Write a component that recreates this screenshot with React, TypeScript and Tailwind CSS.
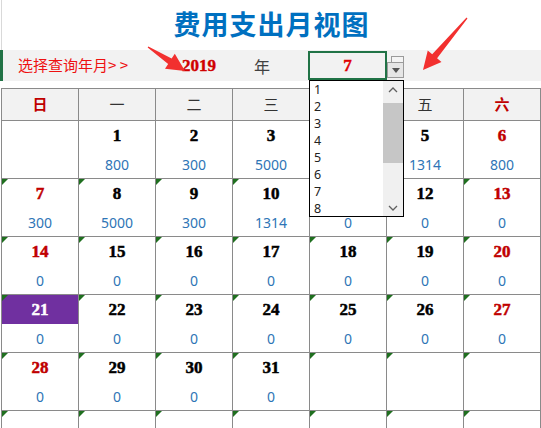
import React from 'react';

type Cell = { day?: number; amount?: number; mark?: boolean };

const weekNames = ['日', '一', '二', '三', '四', '五', '六'];

const amounts: Record<number, number> = { 1: 800, 2: 300, 3: 5000, 4: 300, 5: 1314, 6: 800, 7: 300, 8: 5000, 9: 300, 10: 1314 };

// July 2019 starts on Monday
const buildRows = (): Cell[][] => {
  const rows: Cell[][] = [];
  for (let r = 0; r < 6; r++) {
    const row: Cell[] = [];
    for (let c = 0; c < 7; c++) {
      const n = r * 7 + c;
      if (n >= 1 && n <= 31) row.push({ day: n, amount: amounts[n] ?? 0, mark: r > 0 });
      else row.push({ mark: r > 0 });
    }
    rows.push(row);
  }
  return rows;
};

const serif = { fontFamily: '"Liberation Serif", "Times New Roman", serif' };
const cjk = { fontFamily: '"Noto Sans CJK SC", sans-serif' };

const Arrow: React.FC<{ tail: [number, number]; tip: [number, number] }> = ({ tail, tip }) => {
  const dx = tip[0] - tail[0];
  const dy = tip[1] - tail[1];
  const len = Math.hypot(dx, dy);
  const ux = dx / len;
  const uy = dy / len;
  const nx = -uy;
  const ny = ux;
  const L = 18;
  const bx = tip[0] - ux * L;
  const by = tip[1] - uy * L;
  const pt = (x: number, y: number, k: number) => `${x + nx * k},${y + ny * k}`;
  const points = [
    pt(tail[0], tail[1], 0.6),
    pt(bx, by, 3.2),
    pt(bx, by, 9),
    `${tip[0]},${tip[1]}`,
    pt(bx, by, -9),
    pt(bx, by, -3.2),
    pt(tail[0], tail[1], -0.6),
  ].join(' ');
  return <polygon points={points} fill="#f2302f" />;
};

const DayCell: React.FC<{ cell: Cell; col: number }> = ({ cell, col }) => {
  const weekend = col === 0 || col === 6;
  const today = cell.day === 21;
  return (
    <div className="relative h-[58px] border-r border-b border-[#8a8a8a] flex flex-col">
      {cell.mark && (
        <span className="absolute left-0 top-0 w-0 h-0 border-t-[6px] border-r-[6px] border-t-[#1f6f1f] border-r-transparent" />
      )}
      <div
        className={`h-[29px] flex items-center justify-center text-[17px] font-bold [-webkit-text-stroke:0.5px] ${
          today ? 'bg-[#7030a0] text-white' : weekend ? 'text-[#c00000]' : 'text-black'
        }`}
        style={serif}
      >
        {cell.day ?? ''}
      </div>
      <div className="h-[28px] flex items-center justify-center text-[14px] text-[#2e75b6]">
        {cell.day ? cell.amount : ''}
      </div>
    </div>
  );
};

export default function App() {
  const rows = buildRows();
  return (
    <div
      className="relative w-[541px] h-[428px] overflow-hidden bg-white"
      style={{ fontFamily: '"Noto Sans", "Noto Sans CJK SC", sans-serif' }}
    >
      <div className="h-[50px] ml-px border-l border-[#d9d9d9] flex items-center justify-center">
        <h1 className="text-[27px] font-bold text-[#0070c0] tracking-[1px] leading-none pb-1" style={cjk}>
          费用支出月视图
        </h1>
      </div>

      <div className="h-[31px] bg-[#f2f2f2] border-l-[3px] border-[#217346] flex items-center">
        <div className="w-[179px] pl-[15px] text-[15px] text-[#ee1111] whitespace-pre" style={cjk}>
          选择查询年月&gt; &gt;
        </div>
        <div className="w-[72px] text-[17px] font-bold text-[#d00000] [-webkit-text-stroke:0.4px]" style={serif}>
          2019
        </div>
        <div className="w-[54px] text-[16px] text-[#404040]" style={cjk}>
          年
        </div>
        <div
          className="w-[79px] h-[29px] self-start mt-px border-2 border-[#217346] flex items-center justify-center text-[17px] font-bold text-[#e00000] [-webkit-text-stroke:0.4px]"
          style={serif}
        >
          7
        </div>
        <div className="relative w-[17px] h-[22px] self-start mt-[6px]">
          <div className="absolute right-0 top-0 w-[13px] h-[8px] border border-[#9a9a9a] bg-[#f4f4f4]" />
          <div className="absolute left-0 bottom-0 w-[17px] h-[16px] border border-[#9a9a9a] bg-[#e6e6e6] flex items-center justify-center">
            <svg width="8" height="5" viewBox="0 0 8 5">
              <polygon points="0,0 8,0 4,5" fill="#555" />
            </svg>
          </div>
        </div>
      </div>

      <div className="h-[7px]" />

      <div className="ml-px border-l border-t border-[#8a8a8a] grid grid-cols-[repeat(7,77px)]">
        {weekNames.map((w, i) => (
          <div
            key={w}
            className={`h-[32px] bg-[#f2f2f2] border-r border-b border-[#8a8a8a] flex items-center justify-center text-[15px] ${
              i === 0 || i === 6 ? 'text-[#c00000] font-bold' : 'text-[#333]'
            }`}
            style={cjk}
          >
            {w}
          </div>
        ))}
        {rows.map((row, r) => row.map((cell, c) => <DayCell key={`${r}-${c}`} cell={cell} col={c} />))}
      </div>

      {/* month dropdown list */}
      <div className="absolute left-[309px] top-[80px] w-[95px] h-[137px] border border-black bg-white flex">
        <div className="flex-1 pl-[4px] text-[12.5px] text-[#222]">
          {[1, 2, 3, 4, 5, 6, 7, 8].map((m) => (
            <div key={m} className="h-[17px] leading-[17px]">
              {m}
            </div>
          ))}
        </div>
        <div className="w-[20px] bg-[#f0f0f0] flex flex-col items-center">
          <div className="h-[17px] flex items-center justify-center">
            <svg width="10" height="6" viewBox="0 0 10 6">
              <polyline points="1,5 5,1 9,5" fill="none" stroke="#606060" strokeWidth="1.3" />
            </svg>
          </div>
          <div className="mt-[5px] w-[20px] h-[60px] bg-[#c6c6c6]" />
          <div className="flex-1" />
          <div className="h-[17px] flex items-center justify-center">
            <svg width="10" height="6" viewBox="0 0 10 6">
              <polyline points="1,1 5,5 9,1" fill="none" stroke="#606060" strokeWidth="1.3" />
            </svg>
          </div>
        </div>
      </div>

      <svg className="absolute left-0 top-0 pointer-events-none" width="541" height="428">
        <Arrow tail={[148, 47]} tip={[185, 71]} />
        <Arrow tail={[467, 18]} tip={[423, 70]} />
      </svg>
    </div>
  );
}
